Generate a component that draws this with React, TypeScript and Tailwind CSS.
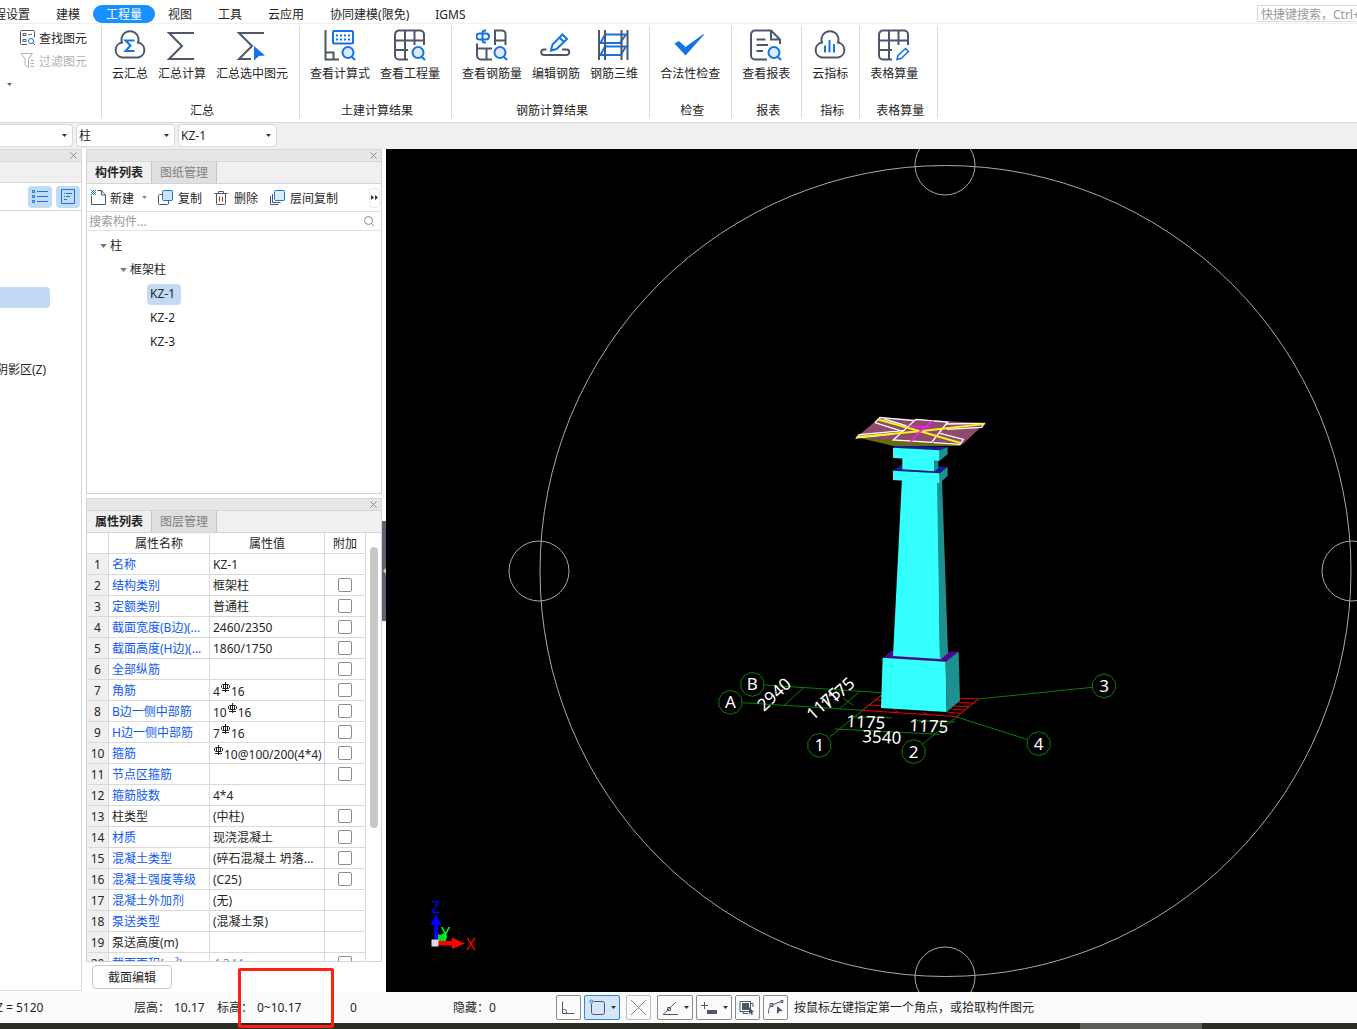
import React, { useState } from 'react';
import { clsx } from 'clsx';

const INK = '#4d566b';
const BLUE = '#1473e6';

interface IconProps {
  size?: number;
  children: React.ReactNode;
}

function Icon({ size = 32, children }: IconProps) {
  return (
    <svg
      width={size}
      height={size}
      viewBox={`0 0 ${size} ${size}`}
      fill="none"
      stroke={INK}
      strokeWidth={size > 20 ? 2 : 1}
      className="shrink-0"
      aria-hidden="true"
    >
      {children}
    </svg>
  );
}

function Magnifier() {
  return (
    <g stroke={BLUE}>
      <circle cx="24" cy="23.500" r="5.5" fill="#dceafc" />
      <path d="M27.500 27.500l3.500 3.500" />
    </g>
  );
}

const CLOUD = 'M8 13.500a8.500 8.500 0 1 1 16 0a7.600 7.600 0 0 1 0 15H8a7.600 7.600 0 0 1 0-15z';
const GRID = 'M14 30.500H5a4 4 0 0 1-4-4V5.500a4 4 0 0 1 4-4h21a4 4 0 0 1 4 4V16M1 11.500h29M1 21h13M11 1.500v29M20.500 1.500V16';

const icons = {
  cloudSum: (
    <Icon>
      <path d={CLOUD} />
      <path d="M20.500 11.500h-9l5 5-5 5.500h9" stroke={BLUE} />
    </Icon>
  ),
  sum: (
    <Icon>
      <path d="M28 4H3l13 13L3 30h25" />
    </Icon>
  ),
  sumSelected: (
    <Icon>
      <path d="M28 4H3l13 13L3 30h12" />
      <path d="M18 17l11 9.500-6 .5-5 4.500z" fill={BLUE} stroke="none" />
    </Icon>
  ),
  formula: (
    <Icon>
      <path d="M1.500 1v29.500H15M1.500 23.500h8v7" />
      <rect x="9" y="2" width="20" height="12.500" rx="1" stroke={BLUE} />
      <path d="M12 6.500h15M12 10.500h15" stroke={BLUE} strokeDasharray="2 2" />
      <Magnifier />
    </Icon>
  ),
  quantity: (
    <Icon>
      <path d={GRID} />
      <Magnifier />
    </Icon>
  ),
  rebar: (
    <Icon>
      <path d="M1 14.500v12a4 4 0 0 0 4 4h11M1 19.500h15M10.500 19.500v11M19 16V1.500h7a3.500 3.500 0 0 1 3.500 3.500v11M19 11.500h10.500" />
      <path d="M3.500 4.500a3 3 0 0 0 0 6M3 10.500h8M10 4.500a3 3 0 0 1 0 6M10 1.500H9A2.500 2.500 0 0 0 6.500 4v7A2.500 2.500 0 0 0 9 13.500h1M3.500 4.500H10" stroke={BLUE} />
      <Magnifier />
    </Icon>
  ),
  editRebar: (
    <Icon>
      <path d="M6.500 20.500H4a2.700 2.700 0 0 0 0 5.500h22.500a2.700 2.700 0 0 0 0-5.500H22" />
      <path d="M11 21.500l1.500-6L22.500 5.500l4.500 4.500-10.500 10zM19.500 8.500l4.500 4.500" stroke={BLUE} />
    </Icon>
  ),
  rebar3d: (
    <Icon>
      <path d="M7 5.500h21l-6 8.500H2.500zM7 17.500h21l-5.500 8.500H2.500z" stroke={BLUE} />
      <path d="M1 1v30M7 1v30M23.500 1v30M29.500 1v30" />
    </Icon>
  ),
  check: (
    <Icon>
      <path d="M0.500 14.500l4.500-2.500 6.500 6L29.500 5l.5.800L11.500 26.500z" fill={BLUE} stroke="none" />
    </Icon>
  ),
  report: (
    <Icon>
      <path d="M17 30.500H5a4 4 0 0 1-4-4V5.500a4 4 0 0 1 4-4h16l9 9V15M21 1.500v9h9M6.500 10.500h9M6.500 16h11.500M6.500 22h6.500" />
      <Magnifier />
    </Icon>
  ),
  cloudIndex: (
    <Icon>
      <path d={CLOUD} />
      <path d="M11 16.500v7M15.500 11v12.500M20 15v8.500" stroke={BLUE} />
    </Icon>
  ),
  sheet: (
    <Icon>
      <path d={GRID} />
      <path d="M19 30.500l1-4 7.500-7 3 3-7.500 7z" stroke={BLUE} strokeWidth={1.500} />
    </Icon>
  ),
};

const TABS = ['工程设置', '建模', '工程量', '视图', '工具', '云应用', '协同建模(限免)', 'IGMS'];

const GROUPS = [
  {
    name: '汇总',
    items: [
      { label: '云汇总', icon: icons.cloudSum },
      { label: '汇总计算', icon: icons.sum },
      { label: '汇总选中图元', icon: icons.sumSelected },
    ],
  },
  {
    name: '土建计算结果',
    items: [
      { label: '查看计算式', icon: icons.formula },
      { label: '查看工程量', icon: icons.quantity },
    ],
  },
  {
    name: '钢筋计算结果',
    items: [
      { label: '查看钢筋量', icon: icons.rebar },
      { label: '编辑钢筋', icon: icons.editRebar },
      { label: '钢筋三维', icon: icons.rebar3d },
    ],
  },
  { name: '检查', items: [{ label: '合法性检查', icon: icons.check }] },
  { name: '报表', items: [{ label: '查看报表', icon: icons.report }] },
  { name: '指标', items: [{ label: '云指标', icon: icons.cloudIndex }] },
  { name: '表格算量', wide: true, items: [{ label: '表格算量', icon: icons.sheet }] },
];

interface Prop {
  name: string;
  value?: string;
  check?: boolean;
  plain?: boolean;
  muted?: boolean;
}

// "#" in a value stands for the rebar grade symbol
const PROPS: Prop[] = [
  { name: '名称', value: 'KZ-1' },
  { name: '结构类别', value: '框架柱', check: true },
  { name: '定额类别', value: '普通柱', check: true },
  { name: '截面宽度(B边)(...', value: '2460/2350', check: true },
  { name: '截面高度(H边)(...', value: '1860/1750', check: true },
  { name: '全部纵筋', check: true },
  { name: '角筋', value: '4#16', check: true },
  { name: 'B边一侧中部筋', value: '10#16', check: true },
  { name: 'H边一侧中部筋', value: '7#16', check: true },
  { name: '箍筋', value: '#10@100/200(4*4)', check: true },
  { name: '节点区箍筋', check: true },
  { name: '箍筋肢数', value: '4*4' },
  { name: '柱类型', value: '(中柱)', check: true, plain: true },
  { name: '材质', value: '现浇混凝土', check: true },
  { name: '混凝土类型', value: '(碎石混凝土 坍落...', check: true },
  { name: '混凝土强度等级', value: '(C25)', check: true },
  { name: '混凝土外加剂', value: '(无)' },
  { name: '泵送类型', value: '(混凝土泵)' },
  { name: '泵送高度(m)', plain: true },
  { name: '截面面积(m²)', value: '4.344', check: true, muted: true },
];

function Caret({ className }: { className?: string }) {
  return (
    <svg width="5" height="3" viewBox="0 0 5 3" className={clsx('shrink-0', className)} aria-hidden="true">
      <path d="M0 0h5L2.500 3z" fill="currentColor" />
    </svg>
  );
}

function RebarMark() {
  return (
    <svg width="11" height="14" viewBox="0 0 11 14" className="inline-block align-baseline" fill="none" stroke="#222" aria-hidden="true">
      <path d="M5.500 0v10M2.500 2.500h6l1 1v2l-1 1h-6l-1-1v-2zM3.500 2v5M7.500 2v5M2 8.500h7" />
    </svg>
  );
}

function TopTabs() {
  const [active, setActive] = useState('工程量');
  return (
    <header className="flex h-6 shrink-0 items-end justify-between overflow-hidden border-b border-[#f0f0f0]">
      <nav className="-ml-[31px] flex">
        {TABS.map((tab) => (
          <button
            key={tab}
            onClick={() => setActive(tab)}
            className={clsx(
              'flex h-[18px] items-start rounded-full px-[13px] leading-5 whitespace-nowrap',
              active === tab && 'bg-[#1890ff] text-white'
            )}
          >
            {tab}
          </button>
        ))}
      </nav>
      <input
        aria-label="快捷键搜索"
        placeholder="快捷键搜索，Ctrl+F"
        className="mb-px h-[17px] w-[100px] border border-r-0 border-[#dcdcdc] pt-0.5 pl-[3px] placeholder:text-[#999]"
      />
    </header>
  );
}

function Ribbon() {
  return (
    <div className="flex shrink-0 overflow-hidden border-b border-[#d9d9d9] pt-0.5 pb-1">
      <div className="flex h-[92px] w-[102px] shrink-0 flex-col border-r border-[#d9d9d9] pt-1">
        <button className="flex h-4 items-start gap-1 pl-5 leading-[18px]">
          <Icon size={15}>
            <path d="M7 14.500H1.500a1 1 0 0 1-1-1v-12a1 1 0 0 1 1-1h12a1 1 0 0 1 1 1V7M3 3.500h3v2H3zM3 9.500h3v2H3zM8.500 4.500H12" />
            <path d="M13 13l2 2" stroke={BLUE} />
            <circle cx="11" cy="11" r="2.500" stroke={BLUE} />
          </Icon>
          查找图元
        </button>
        <button disabled className="mt-[7px] flex h-4 items-start gap-1 pl-5 leading-[18px] text-[#b3b3b3]">
          <Icon size={15}>
            <path
              d="M1 .5h11.500L8.500 6v8.500L5 12V6zM10.500 7.500H14M10.500 10.500H14M10.500 13.500H14"
              stroke="#b3b3b3"
            />
          </Icon>
          过滤图元
        </button>
        <Caret className="mt-[14px] ml-[7px] text-[#666]" />
      </div>
      {GROUPS.map((group) => (
        <section
          key={group.name}
          className={clsx(
            'flex h-[92px] shrink-0 flex-col border-r border-[#d9d9d9] pt-[3px]',
            group.wide && 'w-[78px]'
          )}
        >
          <div className="flex gap-[10px] pr-[11px] pl-[10px]">
            {group.items.map((item) => (
              <button key={item.label} className="flex flex-col items-center gap-[5px] leading-4 whitespace-nowrap">
                {item.icon}
                {item.label}
              </button>
            ))}
          </div>
          <h2 className="mt-auto pl-[3px] text-center leading-[14px]">{group.name}</h2>
        </section>
      ))}
    </div>
  );
}

function Picker({ label, value, first }: { label: string; value: string; first?: boolean }) {
  return (
    <div
      className={clsx(
        'flex h-[23px] items-center rounded border border-[#d9d9d9] bg-white pr-[5px]',
        first ? 'w-[73px] rounded-l-none border-l-0' : 'w-[99px]'
      )}
    >
      <select aria-label={label} className="min-w-0 flex-1 appearance-none pl-0.5">
        <option>{value}</option>
      </select>
      <Caret className="text-[#333]" />
    </div>
  );
}

function PanelTitle() {
  return (
    <div className="flex h-3 shrink-0 items-center justify-end border-t border-[#d9d9d9] bg-[#e7e7e7] pr-1">
      <button aria-label="关闭">
        <svg width="7" height="7" viewBox="0 0 7 7" stroke="#888" aria-hidden="true">
          <path d="M.5.5l6 6M6.500.5l-6 6" />
        </svg>
      </button>
    </div>
  );
}

function PanelTabs({ tabs }: { tabs: string[] }) {
  return (
    <div className="flex h-[23px] shrink-0 border-y border-[#d4d4d4] bg-[#f0f0f0]">
      {tabs.map((tab, i) => (
        <button
          key={tab}
          className={clsx(
            'w-[65px] border-r border-[#c5c5c8]',
            i === 0 ? 'font-bold' : 'bg-[#e0e0e0] text-[#808080]'
          )}
        >
          {tab}
        </button>
      ))}
    </div>
  );
}

function NavPane() {
  return (
    <aside className="mb-px flex w-[82px] shrink-0 flex-col border-r border-b border-[#d9d9d9]">
      <PanelTitle />
      <div className="h-[22px] shrink-0 border-y border-[#d9d9d9] bg-[#f0f0f0]" />
      <div className="flex h-7 shrink-0 items-center justify-end gap-1 border-b border-[#d9d9d9] pr-px">
        <button aria-label="列表" className="flex h-[22px] w-6 items-center justify-center rounded-sm bg-[#c2daf3]">
          <Icon size={16}>
            <path d="M5 2.500h11M5 7.500h11M5 12.500h11M.5 1.500h2v2h-2zM.5 6.500h2v2h-2zM.5 11.500h2v2h-2z" stroke={BLUE} />
          </Icon>
        </button>
        <button aria-label="详情" className="flex h-[22px] w-6 items-center justify-center rounded-sm bg-[#c2daf3]">
          <Icon size={16}>
            <path d="M1.500.5h13v14h-13zM4 4.500h1M6 4.500h6M4 7.500h1M6 7.500h4M4 10.500h3" stroke={BLUE} />
          </Icon>
        </button>
      </div>
      <div className="mt-[76px] h-[21px] w-[50px] shrink-0 rounded-r-sm bg-[#c2daf3]" />
      <div className="mt-[54px] flex h-4 w-[46px] shrink-0 items-center justify-end overflow-hidden">
        <span className="whitespace-nowrap">阴影区(Z)</span>
      </div>
    </aside>
  );
}

function ComponentList() {
  const [selected, setSelected] = useState('KZ-1');
  const tool = 'flex h-4 items-start gap-1 leading-[18px]';
  return (
    <section className="flex h-[345px] shrink-0 flex-col border-x border-b border-[#d4d4d4]">
      <PanelTitle />
      <PanelTabs tabs={['构件列表', '图纸管理']} />
      <div className="flex h-7 shrink-0 items-center border-b border-[#e2e2e2] pr-px pl-1">
        <button className={tool}>
          <Icon size={15}>
            <path d="M.5 6v8.500h14V5L10.500.5H6.500M10.500.5V5h4" />
            <path d="M0 .5h5M1 1.500h4M0 2.500h5M1 3.500h4M0 4.500h5" stroke={BLUE} strokeDasharray="1 1" />
          </Icon>
          新建
        </button>
        <Caret className="ml-2 text-[#888]" />
        <button className={clsx(tool, 'ml-[11px]')}>
          <Icon size={16}>
            <path d="M4 4.500H1.500a1 1 0 0 0-1 1v8a1 1 0 0 0 1 1h8a1 1 0 0 0 1-1V11" />
            <rect x="4.500" y=".5" width="10" height="10" rx="1" fill="#d0e2fa" stroke={BLUE} />
          </Icon>
          复制
        </button>
        <button className={clsx(tool, 'ml-3')}>
          <Icon size={16}>
            <path d="M.5 3.500h13M2.500 3.500v10a1 1 0 0 0 1 1h7a1 1 0 0 0 1-1v-10M4.500 3V1.500h5V3" />
            <path d="M5.500 6.500v5M8.500 6.500v5" stroke="#d9202a" />
          </Icon>
          删除
        </button>
        <button className={clsx(tool, 'ml-3')}>
          <Icon size={16}>
            <path d="M2.500 4v8.500h8M.5 6v8.500h8" />
            <rect x="4.500" y=".5" width="10" height="10" rx="1" fill="#dceafc" stroke={BLUE} />
          </Icon>
          层间复制
        </button>
        <button
          aria-label="更多"
          className="ml-auto flex h-5 w-[11px] items-center justify-center rounded border border-[#e8e8e8]"
        >
          <svg width="7" height="5" viewBox="0 0 7 5" fill="#333" className="shrink-0" aria-hidden="true">
            <path d="M0 0l3 2.500L0 5zM4 0l3 2.500L4 5z" />
          </svg>
        </button>
      </div>
      <div className="flex h-[19px] shrink-0 items-center border-b border-[#e2e2e2] pr-[7px]">
        <input
          aria-label="搜索构件"
          placeholder="搜索构件..."
          className="min-w-0 flex-1 pt-0.5 pl-0.5 placeholder:text-[#999]"
        />
        <svg width="10" height="10" viewBox="0 0 10 10" fill="none" stroke="#888" aria-hidden="true">
          <circle cx="4.500" cy="4.500" r="4" />
          <path d="M7.500 7.500L10 10" />
        </svg>
      </div>
      <div className="pt-[3px] leading-6">
        <div className="flex items-center gap-[3px] pl-[13px]">
          <Caret className="h-1 w-[7px] text-[#777]" />柱
        </div>
        <div className="flex items-center gap-[3px] pl-[33px]">
          <Caret className="h-1 w-[7px] text-[#777]" />
          框架柱
        </div>
        {['KZ-1', 'KZ-2', 'KZ-3'].map((kz) => (
          <div key={kz} className="flex h-6 items-center pl-[60px]">
            <button
              onClick={() => setSelected(kz)}
              className={clsx('h-[21px] w-[34px] rounded-sm pl-[3px] text-left leading-5', selected === kz && 'bg-[#c2daf3]')}
            >
              {kz}
            </button>
          </div>
        ))}
      </div>
    </section>
  );
}

function PropertyTable() {
  const cell = 'h-[21px] border-r border-b border-[#d9d9d9] p-0';
  const text = 'pt-0.5 leading-[18px] whitespace-nowrap';
  return (
    <table className="w-[279px] table-fixed border-separate border-spacing-0">
      <thead>
        <tr>
          <th className={clsx(cell, 'w-[22px]')} />
          <th className={clsx(cell, text, 'w-[101px] font-normal')}>属性名称</th>
          <th className={clsx(cell, text, 'w-[115px] font-normal')}>属性值</th>
          <th className={clsx(cell, text, 'w-[41px] font-normal')}>附加</th>
        </tr>
      </thead>
      <tbody>
        {PROPS.map((p, i) => (
          <tr key={p.name}>
            <td className={clsx(cell, text, 'bg-[#f0f0f0] text-center')}>{i + 1}</td>
            <td className={clsx(cell, text, 'overflow-hidden pl-[3px]', !p.plain && 'text-[#1159f0]')}>{p.name}</td>
            <td className={clsx(cell, 'overflow-hidden pl-[3px]')}>
              <div className={clsx('h-5', text, p.muted && 'text-[#888]')}>
                {p.value?.split('#').map((part, n) => (
                  <React.Fragment key={n}>
                    {n > 0 && <RebarMark />}
                    {part}
                  </React.Fragment>
                ))}
              </div>
            </td>
            <td className={cell}>
              {p.check && (
                <input
                  type="checkbox"
                  aria-label={`附加 ${p.name}`}
                  className="mx-auto block size-[14px] appearance-none rounded-xs border border-[#8c8c8c] bg-white checked:bg-[#1890ff]"
                />
              )}
            </td>
          </tr>
        ))}
      </tbody>
    </table>
  );
}

function PropertyList() {
  return (
    <section className="flex min-h-0 flex-1 flex-col border-x border-b border-[#d4d4d4]">
      <PanelTitle />
      <PanelTabs tabs={['属性列表', '图层管理']} />
      <div className="flex min-h-0 flex-1 overflow-hidden">
        <PropertyTable />
        <div className="flex-1 pt-[14px] pl-1">
          <div className="h-[281px] w-2 rounded-full bg-[#c8c8c8]" />
        </div>
      </div>
    </section>
  );
}

const AXES = [
  { x: 157, y: 163, name: 'B' },
  { x: 91, y: 217, name: 'A' },
  { x: 358, y: 346, name: '1' },
  { x: 641, y: 365, name: '2' },
  { x: 1212, y: 168, name: '3' },
  { x: 1016, y: 341, name: '4' },
];

const DIMS = [
  { x: 764, y: 712, r: -43, text: '2940' },
  { x: 813, y: 721, r: -42, text: '1175' },
  { x: 827, y: 711, r: -42, text: '1175' },
  { x: 846, y: 727, r: 3, text: '1175' },
  { x: 909, y: 731, r: 3, text: '1175' },
  { x: 862, y: 742, r: 3, text: '3540' },
];

function ring(cx: number, cy: number, r: number) {
  return Array.from({ length: 10 }, (_, i) => {
    const a = (Math.PI * 2 * i) / 10 + Math.PI / 10;
    return `${(cx + r * Math.cos(a)).toFixed(1)},${(cy + r * Math.sin(a)).toFixed(1)}`;
  }).join(' ');
}

function Viewport() {
  return (
    <main className="min-w-0 flex-1 bg-black">
      <svg
        viewBox="386 149 971 843"
        preserveAspectRatio="xMidYMid slice"
        className="block h-full w-full"
        fill="none"
        role="img"
        aria-label="三维视图"
      >
        {/* orbit ring */}
        <g stroke="#a8a8a8">
          <circle cx="945.500" cy="571" r="405.500" />
          <circle cx="945" cy="165" r="30" />
          <circle cx="945" cy="977" r="30" />
          <circle cx="539" cy="571" r="30" />
          <circle cx="1352" cy="571" r="30" />
        </g>

        {/* axis grid */}
        <g transform="translate(700 630) scale(0.3333)" stroke="#088008" strokeWidth="3">
          <path d="M193 165L545 188M127 218L487 241M388 322L545 195M668 342L770 261L835 207L1176 172M980 328L770 261" />
          <path d="M310 174L250 228M480 184L418 237M405 297L718 313M455 260L575 264M650 272L765 276M300 173h14M430 205l30 20" />
          {AXES.map((a) => (
            <polygon key={a.name} points={ring(a.x, a.y, 36)} />
          ))}
          <path
            d="M487 241L545 196L835 207L770 260zM508 225l40 2M528 210l20 1M580 237l16 9M670 247l16 9M740 246l38 4M752 237l44 3M762 228l46 2M775 218l46 1"
            stroke="#f00000"
          />
        </g>

        {/* column base and shaft */}
        <g transform="translate(700 630) scale(0.3333)">
          <path d="M550 83L575 62L776 65L737 95z" fill="#4b0a8c" />
          <path d="M548 83L737 95L740 246L543 234z" fill="#33ffff" />
          <path d="M737 95L776 65L780 212L740 246z" fill="#1f9090" />
        </g>
        <path d="M902 478L938 481L940 659L893 656z" fill="#33ffff" />
        <path d="M937 480L942 479L948 653L940 660z" fill="#1f9090" />

        {/* column head and slab */}
        <g transform="translate(840 400) scale(0.3333)">
          <path d="M159 212L187 192L323 200L299 220z" fill="#1b1b8c" />
          <path d="M159 212L299 220V249L159 240z" fill="#33ffff" />
          <path d="M299 220L323 200V228L299 249z" fill="#1f9090" />
          <path d="M187 170L283 178V214L187 208z" fill="#33ffff" />
          <path d="M283 178L295 176V205L283 214z" fill="#1f9090" />
          <path d="M159 143L165 136L323 141L299 152z" fill="#1b1b8c" />
          <path d="M159 143L299 151V182L159 174z" fill="#33ffff" />
          <path d="M299 151L323 141V163L299 182z" fill="#1f9090" />
          <path d="M50 112L160 138H360L372 128z" fill="#6b6a14" />
          <path d="M50 112L120 52L435 70L368 133z" fill="#8f4a6c" />
          <g stroke="#fff" strokeWidth="4">
            <path d="M160 120L228 58L323 66L275 127zM105 68L120 52L220 62M320 72L433 70L425 82L320 88M160 102L50 114L58 104L190 92M105 68L180 92M280 128L360 133L370 118L300 100M130 56L200 78" />
          </g>
          <path d="M112 58L240 94L433 72M50 111L240 94L362 129" stroke="#f5f01e" strokeWidth="6" />
          <path d="M208 78L272 82M280 62L240 95L210 128" stroke="#ff14ff" strokeWidth="5" />
        </g>

        <g fill="#fff" fontSize="17" fontFamily="'Noto Sans', sans-serif">
          {AXES.map((a) => (
            <text key={a.name} x={700 + a.x / 3} y={636 + a.y / 3} textAnchor="middle">
              {a.name}
            </text>
          ))}
          {DIMS.map((d, i) => (
            <text key={i} transform={`translate(${d.x} ${d.y}) rotate(${d.r})`}>
              {d.text}
            </text>
          ))}
        </g>

        {/* orientation triad */}
        <path d="M437 933l3 2 4-2 3 3-1 5h-9z" fill="#00e020" />
        <path d="M434 941V925h-3.500L436 914l5.500 11H438v16z" fill="#0000ff" />
        <path d="M438 941h14v-3.500l13 6-13 5.500v-3.500H438z" fill="#ff0000" />
        <path d="M431.500 939.500h7v7h-7z" fill="#dcdcdc" />
        <g fontSize="16" fontFamily="'Noto Sans', sans-serif">
          <text x="431" y="913" fill="#0000ff">Z</text>
          <text x="441" y="939" fill="#00ff20">Y</text>
          <text x="466" y="950" fill="#ff0000">X</text>
        </g>
      </svg>
    </main>
  );
}

const TOOLS = [
  { label: '正交', d: 'M3.500 3.500v12h12M3.500 11.500h2a2 2 0 0 1 2 2v2' },
  { label: '矩形选择', d: 'M6 3.500h8.500a2 2 0 0 1 2 2v9a2 2 0 0 1-2 2h-9a2 2 0 0 1-2-2V6', active: true, menu: true },
  { label: '交点', d: 'M2 2l15 15M17 2L2 17', muted: true },
  { label: '角度', d: 'M2 16.500h15M2.500 16L15 4M6.500 9.500h3v3h-3z', menu: true },
  { label: '偏移', d: 'M4.500 4v7M1 7.500h7', solid: 'M7 12h10v4H7z', menu: true },
  {
    label: '图层',
    d: 'M2 3.500h10.500v10H2zM12.500 5.500h2.500V9M5 13.500v2h5',
    solid: 'M4 5h7v7H4zM11 9l5 5-2 .5 1 2-1.500.5-1-2-1.500 1z',
  },
  { label: '顶点', d: 'M2.500 15.500C2.500 11 3.500 9 5 7.500L15 3.500M4 5.500h3v3H4zM15 2.500h2v2h-2z', solid: 'M11 8l6 5h-3l-3 3z' },
];

function StatusBar() {
  return (
    <footer className="flex h-[31px] shrink-0 items-center overflow-hidden bg-[#fbfbfb] whitespace-nowrap">
      <span className="-ml-1 w-[138px] shrink-0">Z = 5120</span>
      <span className="w-10 shrink-0">层高：</span>
      <span className="w-[43px] shrink-0">10.17</span>
      <span className="w-10 shrink-0">标高：</span>
      <span className="w-[93px] shrink-0">0~10.17</span>
      <span className="w-[103px] shrink-0">0</span>
      <span className="w-[103px] shrink-0">隐藏：0</span>
      <div className="flex shrink-0 gap-[3px]">
        {TOOLS.map((tool) => (
          <button
            key={tool.label}
            aria-label={tool.label}
            className={clsx(
              'flex h-[25px] items-center justify-center rounded-xs border',
              tool.menu ? 'w-9 gap-1' : 'w-[25px]',
              tool.active ? 'border-[#2f86e8] bg-[#d6e6fa]' : 'border-[#8c8c8c]',
              tool.muted && 'mx-[3px] border-[#bdbdbd]'
            )}
          >
            <Icon size={19}>
              <path d={tool.d} stroke={tool.muted ? '#888' : INK} />
              {tool.solid && <path d={tool.solid} fill={INK} stroke="none" />}
              {tool.active && <circle cx="3.500" cy="3.500" r="1.500" stroke={BLUE} />}
            </Icon>
            {tool.menu && <Caret className="text-[#333]" />}
          </button>
        ))}
      </div>
      <span className="ml-1.5">按鼠标左键指定第一个角点，或拾取构件图元</span>
    </footer>
  );
}

export default function App() {
  return (
    <div className="relative flex h-screen flex-col overflow-hidden bg-white font-['Noto_Sans','Noto_Sans_CJK_SC',sans-serif] text-[12px] leading-4 text-[#262626]">
      <TopTabs />
      <Ribbon />
      <div className="flex h-[26px] shrink-0 gap-[3px] bg-[#f0f0f0] pt-px">
        <Picker label="楼层" value="" first />
        <Picker label="构件类型" value="柱" />
        <Picker label="构件" value="KZ-1" />
      </div>
      <div className="flex min-h-0 flex-1">
        <NavPane />
        <div className="ml-1 flex w-[296px] shrink-0 flex-col">
          <ComponentList />
          <div className="h-1 shrink-0" />
          <PropertyList />
          <div className="flex h-[30px] shrink-0 items-start pt-[3px] pl-1.5">
            <button className="h-6 w-20 rounded border border-[#c8c8c8] pt-0.5">截面编辑</button>
          </div>
        </div>
        <div className="flex w-1 shrink-0 flex-col pt-[372px]">
          <button aria-label="收起" className="flex h-[100px] items-center justify-end bg-[#5a6472]">
            <svg width="3" height="6" viewBox="0 0 3 6" fill="#ccc" aria-hidden="true">
              <path d="M3 0v6L0 3z" />
            </svg>
          </button>
        </div>
        <Viewport />
      </div>
      <StatusBar />
      <div className="flex h-1.5 shrink-0 justify-end bg-[#2b2d24] pr-[155px]">
        <div className="w-[122px] bg-[#5c5d56]" />
      </div>
      {/* marks the elevation value */}
      <div className="pointer-events-none absolute bottom-px left-[238px] h-[60px] w-24 rounded-xs border-3 border-[#ff2015]" />
    </div>
  );
}
